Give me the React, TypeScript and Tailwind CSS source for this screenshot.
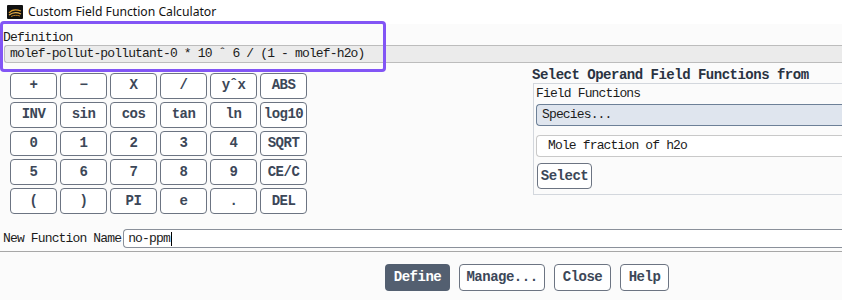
const keys = [
  ["+", "−", "X", "/", "yˆx", "ABS"],
  ["INV", "sin", "cos", "tan", "ln", "log10"],
  ["0", "1", "2", "3", "4", "SQRT"],
  ["5", "6", "7", "8", "9", "CE/C"],
  ["(", ")", "PI", "e", ".", "DEL"],
];

const mono = "font-['Liberation_Mono','Noto_Sans_CJK_SC',monospace]";
const plain = "text-[13px] tracking-[-0.85px]";
const bold = "text-[14px] font-bold tracking-[-0.5px]";

function AppIcon() {
  return (
    <svg width="16" height="14" viewBox="0 0 16 14">
      <rect width="16" height="14" rx="1" fill="#111" />
      <path d="M2 8 C5 4, 9 4, 14 6" stroke="#d99a2b" strokeWidth="1.2" fill="none" />
      <path d="M2 10 C6 7, 10 7, 14 9" stroke="#e8b04a" strokeWidth="1.2" fill="none" />
      <path d="M4 11.5 C7 10, 10 10, 13 11" stroke="#b87a1e" strokeWidth="1" fill="none" />
    </svg>
  );
}

export default function App() {
  return (
    <div className={`relative h-[300px] w-[842px] overflow-hidden bg-[#fbfbfb] text-[#1b1b1b] ${mono}`}>
      <div className="flex h-[24px] items-center bg-white pl-[7px]">
        <AppIcon />
        <span className="ml-[5px] font-['Noto_Sans',sans-serif] text-[12.2px] tracking-normal text-[#111]">Custom Field Function Calculator</span>
      </div>

      <div className={`pl-[3px] pt-[7px] leading-[14px] ${plain}`}>Definition</div>
      <div className={`ml-[4px] flex h-[18px] items-center rounded-l-[3px] border border-r-0 border-[#bcbcbc] bg-[#ebebeb] pl-[5px] whitespace-pre ${plain}`}>
        molef-pollut-pollutant-0 * 10 ˆ 6 / (1 - molef-h2o)
      </div>

      <div className="flex h-[166px] pt-[10px]">
        <div className="ml-[10px] grid h-[141px] w-[297px] grid-cols-6 grid-rows-5 gap-x-[3px] gap-y-[3px]">
          {keys.flat().map((k) => (
            <button
              key={k}
              className={`flex items-center justify-center rounded-[4px] border border-[#6c7482] bg-white text-[#3c4758] ${bold}`}
            >
              {k}
            </button>
          ))}
        </div>
        <div className="ml-auto -mt-[5px] w-[310px]">
          <div className={`h-[15px] leading-[15px] text-[#2a3342] ${bold}`}>Select Operand Field Functions from</div>
          <div className="ml-[1px] h-[112px] border-y border-l border-[#d3d7dd] pl-[2px]">
            <div className={`h-[20px] pt-[3px] leading-[14px] ${plain}`}>Field Functions</div>
            <div className={`flex h-[22px] items-center rounded-l-[4px] border border-r-0 border-[#6d8097] bg-[#dfe5ee] pl-[5px] ${plain}`}>
              Species...
            </div>
            <div className={`mt-[9px] flex h-[22px] items-center rounded-l-[4px] border border-r-0 border-[#c9c9c9] bg-white pl-[11px] ${plain}`}>
              Mole fraction of h2o
            </div>
            <button className={`mt-[6px] ml-[1px] flex h-[26px] w-[55px] items-center justify-center rounded-[4px] border border-[#6c7482] bg-white text-[#3c4758] ${bold}`}>
              Select
            </button>
          </div>
        </div>
      </div>

      <div className="flex h-[19px] items-center">
        <span className={`pl-[3px] ${plain}`}>New Function Name</span>
        <div className={`ml-[2px] flex h-[19px] flex-1 items-center rounded-tl-[4px] rounded-bl-[4px] border-t border-l border-b border-[#8a909a] bg-white pl-[4px] ${plain}`}>
          no-ppm<span className="ml-px inline-block h-[14px] w-px bg-black" />
        </div>
      </div>
      <div className="mt-[3px] h-px bg-[#a7a7a7]" />

      <div className="mt-[12px] flex gap-[9px] pl-[385px]">
        <button className={`flex h-[27px] w-[65px] items-center justify-center rounded-[4px] bg-[#535f70] text-white ${bold}`}>Define</button>
        <button className={`flex h-[27px] w-[86px] items-center justify-center rounded-[4px] border border-[#6c7482] bg-white text-[#3c4758] ${bold}`}>Manage...</button>
        <button className={`flex h-[27px] w-[57px] items-center justify-center rounded-[4px] border border-[#6c7482] bg-white text-[#3c4758] ${bold}`}>Close</button>
        <button className={`flex h-[27px] w-[49px] items-center justify-center rounded-[4px] border border-[#6c7482] bg-white text-[#3c4758] ${bold}`}>Help</button>
      </div>

      <div className="pointer-events-none absolute left-0 top-[21px] h-[51px] w-[386px] rounded-[4px] border-[3px] border-[#8255f5]" />
    </div>
  );
}
